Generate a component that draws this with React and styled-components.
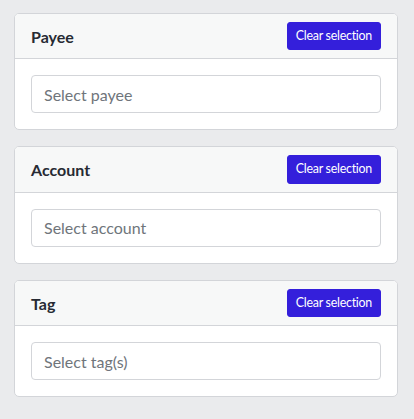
import React from "react";
import styled, { createGlobalStyle } from "styled-components";

const Global = createGlobalStyle`
  html, body { margin: 0; padding: 0; }
  body {
    background: #eaebed;
    font-family: "Lato", "Open Sans", sans-serif;
    color: #212529;
  }
  * { box-sizing: border-box; }
`;

const Page = styled.div`
  display: flex;
  flex-direction: column;
  gap: 16px;
  padding: 13px 16px 13px 14px;
`;

const Card = styled.section`
  background: #fff;
  border: 1px solid #d3d5d9;
  border-radius: 5px;
  overflow: hidden;
`;

const Header = styled.div`
  display: flex;
  align-items: center;
  justify-content: space-between;
  padding: 8px 16px;
  background: #f7f8f8;
  border-bottom: 1px solid #d3d5d9;
`;

const Title = styled.h3`
  margin: 0;
  font-size: 16px;
  font-weight: 700;
  color: #262a33;
`;

const ClearButton = styled.button`
  font-family: inherit;
  font-size: 12.4px;
  letter-spacing: -0.25px;
  line-height: 18.4px;
  padding: 4px 8px;
  border: 1px solid #341fdb;
  border-radius: 3px;
  background: #341fdb;
  color: #fff;
  cursor: pointer;
`;

const Body = styled.div`
  padding: 16px;
`;

const Input = styled.input`
  display: block;
  width: 100%;
  height: 38px;
  padding: 6px 12px;
  font-family: inherit;
  font-size: 16px;
  border: 1px solid #d3d5d9;
  border-radius: 4px;
  background: #fff;
  color: #495057;
  outline: none;
  &::placeholder { color: #6f757b; }
`;

const sections = [
  { title: "Payee", placeholder: "Select payee" },
  { title: "Account", placeholder: "Select account" },
  { title: "Tag", placeholder: "Select tag(s)" },
];

export default function App() {
  return (
    <>
      <Global />
      <Page>
        {sections.map((s) => (
          <Card key={s.title}>
            <Header>
              <Title>{s.title}</Title>
              <ClearButton type="button">Clear selection</ClearButton>
            </Header>
            <Body>
              <Input placeholder={s.placeholder} />
            </Body>
          </Card>
        ))}
      </Page>
    </>
  );
}
